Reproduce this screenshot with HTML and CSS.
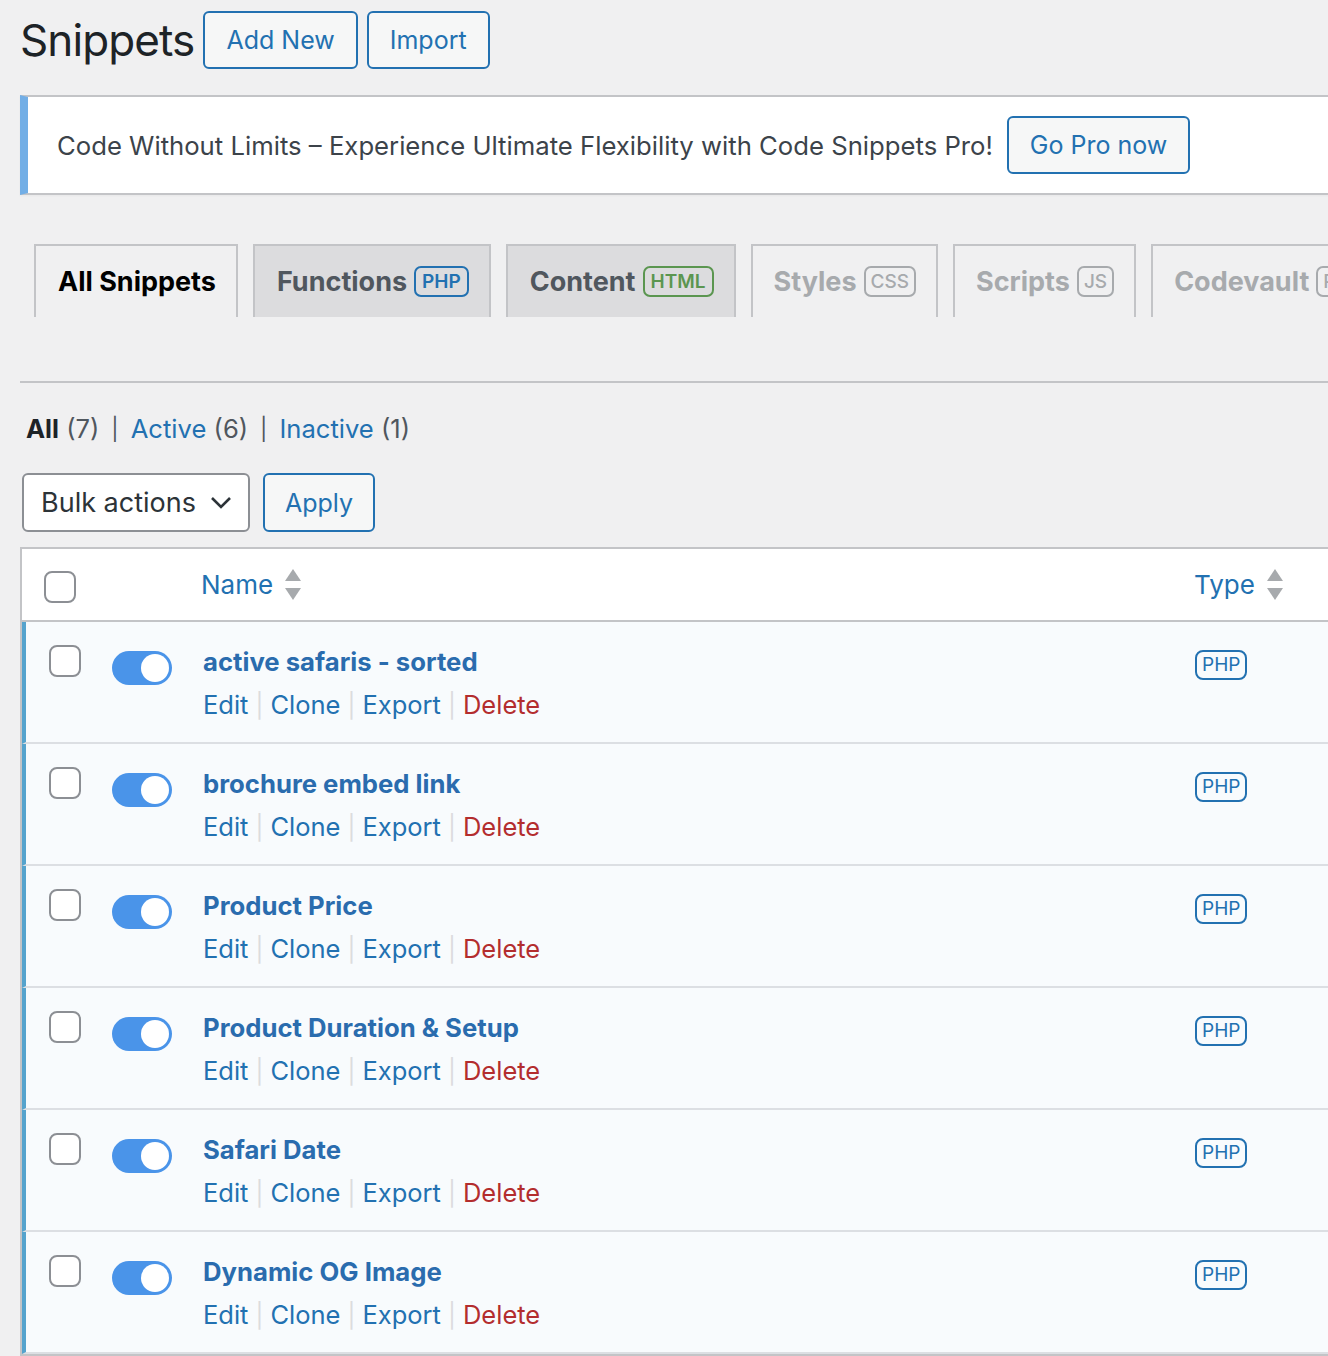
FILE: index.html
```html
<!DOCTYPE html>
<html lang="en">
<head>
<meta charset="utf-8">
<title>Snippets</title>
<link rel="stylesheet" href="styles.css">
</head>
<body>
<div class="wrap">
  <div class="heading">
    <h1 class="title">Snippets</h1>
    <a class="btn">Add New</a>
    <a class="btn">Import</a>
  </div>

  <div class="notice">
    <p class="notice-text">Code Without Limits – Experience Ultimate Flexibility with Code Snippets Pro!</p>
    <a class="btn">Go Pro now</a>
  </div>

  <div class="tabs-wrap">
    <nav class="tabs">
      <a class="tab tab-current">All Snippets</a>
      <a class="tab tab-filled">Functions <span class="badge badge-php">PHP</span></a>
      <a class="tab tab-filled">Content <span class="badge badge-html">HTML</span></a>
      <a class="tab tab-disabled">Styles <span class="badge badge-gray">CSS</span></a>
      <a class="tab tab-disabled">Scripts <span class="badge badge-gray">JS</span></a>
      <a class="tab tab-disabled">Codevault <span class="badge badge-gray">PRO</span></a>
    </nav>
  </div>

  <ul class="subsubsub">
    <li><strong class="cur">All</strong> <span class="count">(7)</span></li>
    <li class="sep">|</li>
    <li><a class="link">Active</a> <span class="count">(6)</span></li>
    <li class="sep">|</li>
    <li><a class="link">Inactive</a> <span class="count">(1)</span></li>
  </ul>

  <div class="bulk">
    <div class="select">
      <span>Bulk actions</span>
      <svg class="chev" width="22" height="14" viewBox="0 0 22 14"><path d="M2 2 L11 11 L20 2" fill="none" stroke="#2c3338" stroke-width="2.6"/></svg>
    </div>
    <a class="btn">Apply</a>
  </div>

  <div class="table">
    <div class="thead">
      <span class="cb cb-head"></span>
      <a class="col-name sort">Name <span class="sorticon"><i class="up"></i><i class="down"></i></span></a>
      <a class="col-type sort">Type <span class="sorticon"><i class="up"></i><i class="down"></i></span></a>
    </div>

    <div class="row">
      <span class="cb"></span>
      <span class="toggle"><i></i></span>
      <div class="col-name">
        <a class="snip-title">active safaris - sorted</a>
        <div class="actions"><a class="link">Edit</a><span class="bar">|</span><a class="link">Clone</a><span class="bar">|</span><a class="link">Export</a><span class="bar">|</span><a class="del">Delete</a></div>
      </div>
      <div class="col-type"><span class="type-badge">PHP</span></div>
    </div>

    <div class="row">
      <span class="cb"></span>
      <span class="toggle"><i></i></span>
      <div class="col-name">
        <a class="snip-title">brochure embed link</a>
        <div class="actions"><a class="link">Edit</a><span class="bar">|</span><a class="link">Clone</a><span class="bar">|</span><a class="link">Export</a><span class="bar">|</span><a class="del">Delete</a></div>
      </div>
      <div class="col-type"><span class="type-badge">PHP</span></div>
    </div>

    <div class="row">
      <span class="cb"></span>
      <span class="toggle"><i></i></span>
      <div class="col-name">
        <a class="snip-title">Product Price</a>
        <div class="actions"><a class="link">Edit</a><span class="bar">|</span><a class="link">Clone</a><span class="bar">|</span><a class="link">Export</a><span class="bar">|</span><a class="del">Delete</a></div>
      </div>
      <div class="col-type"><span class="type-badge">PHP</span></div>
    </div>

    <div class="row">
      <span class="cb"></span>
      <span class="toggle"><i></i></span>
      <div class="col-name">
        <a class="snip-title">Product Duration &amp; Setup</a>
        <div class="actions"><a class="link">Edit</a><span class="bar">|</span><a class="link">Clone</a><span class="bar">|</span><a class="link">Export</a><span class="bar">|</span><a class="del">Delete</a></div>
      </div>
      <div class="col-type"><span class="type-badge">PHP</span></div>
    </div>

    <div class="row">
      <span class="cb"></span>
      <span class="toggle"><i></i></span>
      <div class="col-name">
        <a class="snip-title">Safari Date</a>
        <div class="actions"><a class="link">Edit</a><span class="bar">|</span><a class="link">Clone</a><span class="bar">|</span><a class="link">Export</a><span class="bar">|</span><a class="del">Delete</a></div>
      </div>
      <div class="col-type"><span class="type-badge">PHP</span></div>
    </div>

    <div class="row">
      <span class="cb"></span>
      <span class="toggle"><i></i></span>
      <div class="col-name">
        <a class="snip-title">Dynamic OG Image</a>
        <div class="actions"><a class="link">Edit</a><span class="bar">|</span><a class="link">Clone</a><span class="bar">|</span><a class="link">Export</a><span class="bar">|</span><a class="del">Delete</a></div>
      </div>
      <div class="col-type"><span class="type-badge">PHP</span></div>
    </div>
  </div>
</div>
</body>
</html>
```

FILE: styles.css
```css
* { box-sizing: border-box; }
html, body { margin: 0; padding: 0; }
body {
  background: #f0f0f1;
  font-family: Inter, "Noto Sans", "Liberation Sans", sans-serif;
  color: #3c434a;
  font-size: 26px;
  overflow: hidden;
}
a { text-decoration: none; cursor: pointer; }

.wrap {
  padding-left: 20px;
  margin-right: -60px;
}

.heading {
  display: flex;
  align-items: center;
  gap: 9px;
  padding-top: 11px;
  height: 69px;
}
.title {
  margin: 0;
  font-size: 44px;
  font-weight: 400;
  color: #1d2327;
  letter-spacing: -0.9px;
  line-height: 58px;
}

.btn {
  display: inline-flex;
  align-items: center;
  height: 58px;
  padding: 0 21px;
  border: 2px solid #2271b1;
  border-radius: 6px;
  background: #f6f7f7;
  color: #2271b1;
  font-size: 25px;
  white-space: nowrap;
}

.notice {
  margin-top: 26px;
  background: #fff;
  border: 2px solid #c3c4c7;
  border-left: 8px solid #72aee6;
  box-shadow: 0 1px 2px rgba(0,0,0,.04);
  height: 100px;
  display: flex;
  align-items: center;
  padding-left: 29px;
  gap: 14px;
}
.notice-text { margin: 0; color: #3c434a; font-size: 25.7px; white-space: nowrap; }

.tabs-wrap {
  margin-top: 49px;
  height: 139px;
  border-bottom: 2px solid #c3c4c7;
}
.tabs {
  display: flex;
  gap: 15px;
  padding-left: 14px;
}
.tab {
  display: inline-flex;
  align-items: center;
  height: 73px;
  padding: 0 20px 0 21px;
  border: 2px solid #c3c4c7;
  border-bottom: none;
  font-size: 27px;
  font-weight: 700;
  white-space: nowrap;
}
.tab-current { background: #f0f0f1; color: #000; padding-left: 22px; }
.tab-filled { background: #dcdcde; color: #50575e; padding-left: 22px; }
.tab-disabled { background: #f0f0f1; color: #a7aaad; }

.badge {
  display: inline-block;
  margin-left: 7px;
  padding: 0 6px;
  height: 31px;
  line-height: 27px;
  border: 2px solid;
  border-radius: 7px;
  font-size: 19px;
  font-weight: 600;
}
.badge-php { color: #2271b1; border-color: #2271b1; }
.badge-html { color: #5b9650; border-color: #5b9650; }
.badge-gray { color: #a7aaad; border-color: #a7aaad; font-weight: 500; padding: 0 5px; }

.subsubsub {
  list-style: none;
  margin: 28px 0 0 6px;
  padding: 0;
  display: flex;
  gap: 12px;
  height: 36px;
  line-height: 36px;
  font-size: 25.6px;
}
.subsubsub li { white-space: nowrap; }
.cur { color: #1d2327; }
.count { color: #50575e; }
.sep { color: #50575e; font-size: 22px; }
.link { color: #2271b1; }

.bulk {
  margin-top: 26px;
  display: flex;
  gap: 13px;
  padding-left: 2px;
}
.select {
  width: 228px;
  height: 59px;
  background: #fff;
  border: 2px solid #8c8f94;
  border-radius: 6px;
  display: flex;
  align-items: center;
  justify-content: space-between;
  padding: 0 16px 0 17px;
  color: #2c3338;
  font-size: 27px;
}
.bulk .btn { height: 59px; width: 112px; justify-content: center; }

.table {
  margin-top: 15px;
  border: 2px solid #c3c4c7;
  border-right: none;
  background: #fff;
}
.thead {
  display: flex;
  align-items: center;
  height: 73px;
  border-bottom: 2px solid #c3c4c7;
  padding-left: 22px;
}
.cb {
  display: block;
  width: 32px;
  height: 32px;
  border: 2px solid #8c8f94;
  border-radius: 8px;
  background: #fff;
  flex: none;
}
.thead .cb { margin-top: 4px; }
.thead .col-name { margin-left: 125px; flex: 1; }
.thead .col-type { width: 194px; }
.sort {
  color: #2271b1;
  display: flex;
  align-items: center;
  gap: 12px;
  font-size: 26px;
}
.sorticon {
  display: inline-flex;
  flex-direction: column;
  gap: 7px;
}
.sorticon i {
  display: block;
  width: 0; height: 0;
  border-left: 8px solid transparent;
  border-right: 8px solid transparent;
}
.sorticon .up { border-bottom: 12px solid #a7aaad; }
.sorticon .down { border-top: 12px solid #a7aaad; }

.row {
  display: flex;
  align-items: flex-start;
  height: 122px;
  background: #f8fbfd;
  border-left: 4px solid #55a3cd;
  border-bottom: 2px solid #dcdfe3;
  padding-left: 23px;
  padding-top: 23px;
}
.toggle {
  margin-left: 31px;
  margin-top: 6px;
  width: 60px;
  height: 34px;
  border-radius: 17px;
  background: #4a94e9;
  position: relative;
  flex: none;
}
.toggle i {
  position: absolute;
  right: 3px; top: 3px;
  width: 28px; height: 28px;
  border-radius: 50%;
  background: #fff;
}
.row .col-name {
  margin-left: 31px;
  flex: 1;
  margin-top: -1px;
}
.snip-title {
  display: block;
  color: #2a6cae;
  font-weight: 700;
  font-size: 25.7px;
  line-height: 36px;
}
.actions {
  margin-top: 7px;
  line-height: 36px;
  font-size: 25.5px;
  white-space: nowrap;
}
.bar { color: #dcdcde; margin: 0 7px; font-size: 24px; }
.del { color: #b32d2e; }
.row .col-type { width: 193px; padding-top: 1px; }
.type-badge {
  display: inline-block;
  height: 30px;
  line-height: 26px;
  padding: 0 5px;
  border: 2px solid #2271b1;
  border-radius: 8px;
  color: #2271b1;
  font-size: 19px;
}
```
